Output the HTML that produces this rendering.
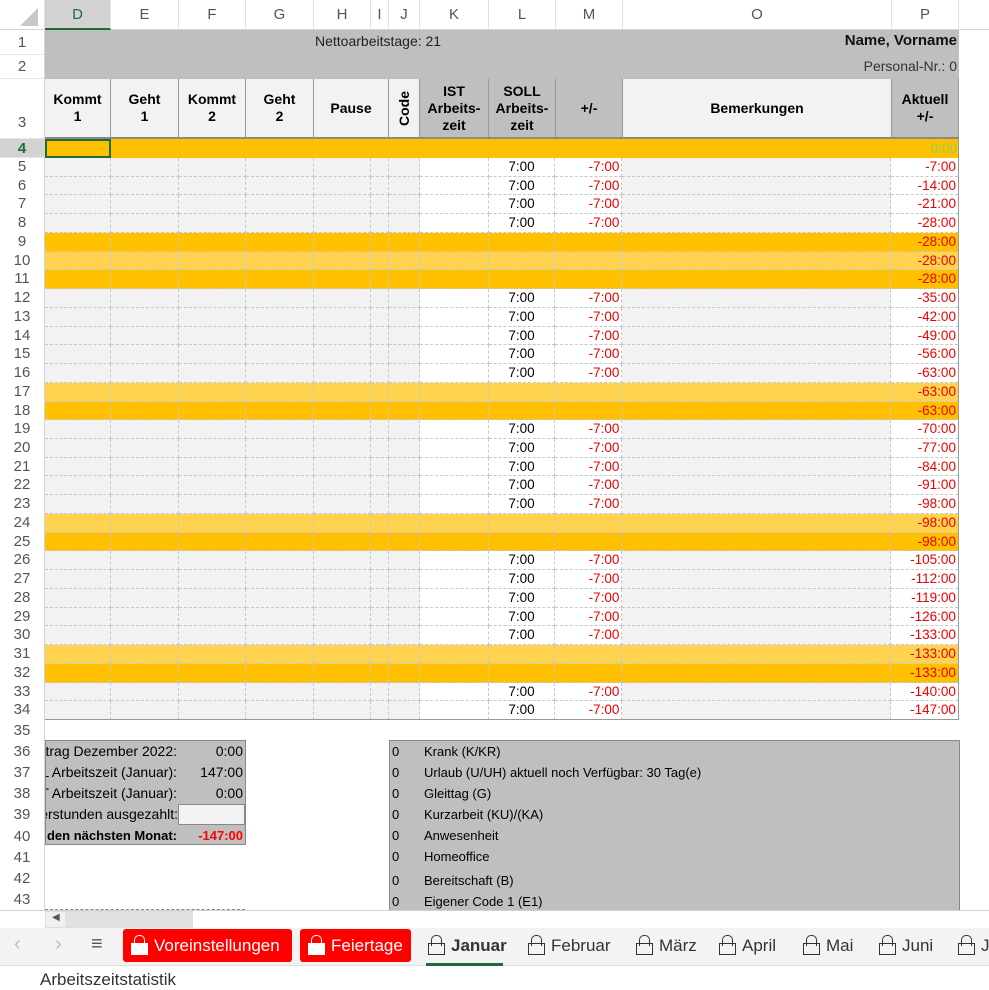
<!DOCTYPE html>
<html><head><meta charset="utf-8"><style>
*{margin:0;padding:0;box-sizing:border-box}
body{width:989px;height:979px;overflow:hidden;background:#fff;font-family:"Liberation Sans",Arial,sans-serif;position:relative}
.abs{position:absolute}
.colh{top:0;height:30px;left:0;width:989px;background:#fff;border-bottom:1px solid #d4d4d4}
.colh div{position:absolute;top:0;height:29px;line-height:30px;text-align:center;font-size:15px;color:#555;border-right:1px solid #e0e0e0}
.rowh{left:0;width:45px;border-right:1px solid #d4d4d4;background:#fff}
.rowh div{position:absolute;left:0;width:44px;text-align:center;font-size:15px;color:#555;border-bottom:1px solid #e6e6e6}
.grid{left:45px;top:158px;width:914px;height:562px;display:flex;flex-direction:column;border-right:1px solid #999;overflow:hidden}
.r{flex:1 1 0;min-height:0;display:flex;font-size:13.5px;overflow:hidden}
.r span{height:100%;border-right:1px dashed #c8c8c8;border-bottom:1px dashed #c8c8c8;background:#fff;line-height:17px;padding:0 2px;white-space:nowrap;overflow:hidden}
.r span:nth-child(1){width:66px}.r span:nth-child(2){width:68px}.r span:nth-child(3){width:67px}.r span:nth-child(4){width:68px}
.r span:nth-child(5){width:57px}.r span:nth-child(6){width:18px}.r span:nth-child(7){width:31px}.r span:nth-child(8){width:69px}
.r span:nth-child(9){width:67px;text-align:center}.r span:nth-child(10){width:67px;text-align:right;color:#e00}
.r span:nth-child(11){width:269px}.r span:nth-child(12){width:67px;text-align:right;color:#e00;border-right:none}
.r span:nth-child(-n+7),.r span:nth-child(11){background:#f2f2f2}
.r.o span{background:#ffc000!important}.r.l span{background:#ffd34f!important}
.hdr{top:79px;height:60px;left:45px;display:flex;border-bottom:2px solid #8a8a8a}
.hdr div{height:58px;border-right:1px solid #999;font-weight:bold;font-size:14px;display:flex;align-items:center;justify-content:center;text-align:center;line-height:17px;background:#f2f2f2}
.hdr .g{background:#bfbfbf}
.sum div{position:absolute;font-size:14px;height:21px;line-height:21px}
.leg div{position:absolute;left:0;font-size:13px;height:21px;line-height:21px;width:560px}
.leg div b{font-weight:normal;display:inline-block;width:34px;padding-left:2px}
.tab{position:absolute;top:929px;height:33px;line-height:33px;font-size:17px;color:#333;white-space:nowrap}
.tab.red{background:#f00;color:#fff;border-radius:3px;padding:0 8px 0 8px}
.lock{display:inline-block;position:relative;width:15px;height:18px;margin-right:8px;vertical-align:-2px}
.lock:before{content:"";position:absolute;left:3px;top:0;width:9px;height:10px;border:1.3px solid currentColor;border-bottom:none;border-radius:5px 5px 0 0}
.lock:after{content:"";position:absolute;left:0;top:8px;width:15px;height:10px;border:1.3px solid currentColor}
.red .lock:after{background:#fff}
</style></head><body>

<div class="abs colh">
<div style="left:0;width:45px;background:#fff"><svg width="45" height="30"><polygon points="38,8 38,26 20,26" fill="#c8c8c8"/></svg></div>
<div style="left:45px;width:66px;background:#d2d2d2;color:#1e6b3a;border-bottom:2px solid #1e6b3a;height:30px">D</div>
<div style="left:111px;width:68px">E</div><div style="left:179px;width:67px">F</div><div style="left:246px;width:68px">G</div>
<div style="left:314px;width:57px">H</div><div style="left:371px;width:18px">I</div><div style="left:389px;width:31px">J</div>
<div style="left:420px;width:69px">K</div><div style="left:489px;width:67px">L</div><div style="left:556px;width:67px">M</div>
<div style="left:623px;width:269px">O</div><div style="left:892px;width:67px">P</div>
</div>

<div class="abs rowh" style="top:30px;height:880px">
<div style="top:0;height:25px;line-height:25px">1</div>
<div style="top:25px;height:24px;line-height:24px">2</div>
<div style="top:49px;height:60px;line-height:88px">3</div>
<div style="top:109px;height:19px;line-height:19px;background:#d2d2d2;color:#1e6b3a;font-weight:bold">4</div>
</div>
<div class="abs" style="left:0;top:158px;width:45px;height:562px;display:flex;flex-direction:column;font-size:15px;color:#555;text-align:center;border-right:1px solid #d4d4d4">
<div style="flex:1;line-height:18px">5</div><div style="flex:1;line-height:18px">6</div><div style="flex:1;line-height:18px">7</div><div style="flex:1;line-height:18px">8</div><div style="flex:1;line-height:18px">9</div><div style="flex:1;line-height:18px">10</div><div style="flex:1;line-height:18px">11</div><div style="flex:1;line-height:18px">12</div><div style="flex:1;line-height:18px">13</div><div style="flex:1;line-height:18px">14</div><div style="flex:1;line-height:18px">15</div><div style="flex:1;line-height:18px">16</div><div style="flex:1;line-height:18px">17</div><div style="flex:1;line-height:18px">18</div><div style="flex:1;line-height:18px">19</div><div style="flex:1;line-height:18px">20</div><div style="flex:1;line-height:18px">21</div><div style="flex:1;line-height:18px">22</div><div style="flex:1;line-height:18px">23</div><div style="flex:1;line-height:18px">24</div><div style="flex:1;line-height:18px">25</div><div style="flex:1;line-height:18px">26</div><div style="flex:1;line-height:18px">27</div><div style="flex:1;line-height:18px">28</div><div style="flex:1;line-height:18px">29</div><div style="flex:1;line-height:18px">30</div><div style="flex:1;line-height:18px">31</div><div style="flex:1;line-height:18px">32</div><div style="flex:1;line-height:18px">33</div><div style="flex:1;line-height:18px">34</div>
</div>
<div class="abs" style="left:0;top:720px;width:45px;height:190px;display:flex;flex-direction:column;font-size:15px;color:#555;text-align:center;border-right:1px solid #d4d4d4">
<div style="flex:1;line-height:21px">35</div><div style="flex:1;line-height:21px">36</div><div style="flex:1;line-height:21px">37</div><div style="flex:1;line-height:21px">38</div><div style="flex:1;line-height:21px">39</div><div style="flex:1;line-height:21px">40</div><div style="flex:1;line-height:21px">41</div><div style="flex:1;line-height:21px">42</div><div style="flex:1;line-height:21px">43</div>
</div>

<div class="abs" style="left:45px;top:30px;width:914px;height:49px;background:#bfbfbf"></div>
<div class="abs" style="left:315px;top:33px;font-size:14px;color:#222">Nettoarbeitstage: 21</div>
<div class="abs" style="right:32px;top:32px;font-size:15px;font-weight:bold;color:#111">Name, Vorname</div>
<div class="abs" style="right:32px;top:58px;font-size:14px;color:#333">Personal-Nr.: 0</div>

<div class="abs hdr">
<div style="width:66px">Kommt<br>1</div><div style="width:68px">Geht<br>1</div><div style="width:67px">Kommt<br>2</div><div style="width:68px">Geht<br>2</div>
<div style="width:75px">Pause</div><div style="width:31px"><span style="transform:rotate(-90deg);display:inline-block">Code</span></div>
<div class="g" style="width:69px">IST<br>Arbeits-<br>zeit</div><div class="g" style="width:67px">SOLL<br>Arbeits-<br>zeit</div><div class="g" style="width:67px">+/-</div>
<div style="width:269px">Bemerkungen</div><div class="g" style="width:67px">Aktuell<br>+/-</div>
</div>

<div class="abs" style="left:45px;top:139px;width:914px;height:19px;background:#ffc000;border-right:1px solid #999"></div>
<div class="abs" style="left:45px;top:139px;width:66px;height:19px;border:2px solid #1e6b3a"></div>
<div class="abs" style="left:892px;top:139px;width:65px;height:19px;line-height:19px;text-align:right;font-size:13.5px;color:#92d050">0:00</div>

<div class="abs grid">
<div class="r"><span></span><span></span><span></span><span></span><span></span><span></span><span></span><span></span><span>7:00</span><span>-7:00</span><span></span><span>-7:00</span></div>
<div class="r"><span></span><span></span><span></span><span></span><span></span><span></span><span></span><span></span><span>7:00</span><span>-7:00</span><span></span><span>-14:00</span></div>
<div class="r"><span></span><span></span><span></span><span></span><span></span><span></span><span></span><span></span><span>7:00</span><span>-7:00</span><span></span><span>-21:00</span></div>
<div class="r"><span></span><span></span><span></span><span></span><span></span><span></span><span></span><span></span><span>7:00</span><span>-7:00</span><span></span><span>-28:00</span></div>
<div class="r o"><span></span><span></span><span></span><span></span><span></span><span></span><span></span><span></span><span></span><span></span><span></span><span>-28:00</span></div>
<div class="r l"><span></span><span></span><span></span><span></span><span></span><span></span><span></span><span></span><span></span><span></span><span></span><span>-28:00</span></div>
<div class="r o"><span></span><span></span><span></span><span></span><span></span><span></span><span></span><span></span><span></span><span></span><span></span><span>-28:00</span></div>
<div class="r"><span></span><span></span><span></span><span></span><span></span><span></span><span></span><span></span><span>7:00</span><span>-7:00</span><span></span><span>-35:00</span></div>
<div class="r"><span></span><span></span><span></span><span></span><span></span><span></span><span></span><span></span><span>7:00</span><span>-7:00</span><span></span><span>-42:00</span></div>
<div class="r"><span></span><span></span><span></span><span></span><span></span><span></span><span></span><span></span><span>7:00</span><span>-7:00</span><span></span><span>-49:00</span></div>
<div class="r"><span></span><span></span><span></span><span></span><span></span><span></span><span></span><span></span><span>7:00</span><span>-7:00</span><span></span><span>-56:00</span></div>
<div class="r"><span></span><span></span><span></span><span></span><span></span><span></span><span></span><span></span><span>7:00</span><span>-7:00</span><span></span><span>-63:00</span></div>
<div class="r l"><span></span><span></span><span></span><span></span><span></span><span></span><span></span><span></span><span></span><span></span><span></span><span>-63:00</span></div>
<div class="r o"><span></span><span></span><span></span><span></span><span></span><span></span><span></span><span></span><span></span><span></span><span></span><span>-63:00</span></div>
<div class="r"><span></span><span></span><span></span><span></span><span></span><span></span><span></span><span></span><span>7:00</span><span>-7:00</span><span></span><span>-70:00</span></div>
<div class="r"><span></span><span></span><span></span><span></span><span></span><span></span><span></span><span></span><span>7:00</span><span>-7:00</span><span></span><span>-77:00</span></div>
<div class="r"><span></span><span></span><span></span><span></span><span></span><span></span><span></span><span></span><span>7:00</span><span>-7:00</span><span></span><span>-84:00</span></div>
<div class="r"><span></span><span></span><span></span><span></span><span></span><span></span><span></span><span></span><span>7:00</span><span>-7:00</span><span></span><span>-91:00</span></div>
<div class="r"><span></span><span></span><span></span><span></span><span></span><span></span><span></span><span></span><span>7:00</span><span>-7:00</span><span></span><span>-98:00</span></div>
<div class="r l"><span></span><span></span><span></span><span></span><span></span><span></span><span></span><span></span><span></span><span></span><span></span><span>-98:00</span></div>
<div class="r o"><span></span><span></span><span></span><span></span><span></span><span></span><span></span><span></span><span></span><span></span><span></span><span>-98:00</span></div>
<div class="r"><span></span><span></span><span></span><span></span><span></span><span></span><span></span><span></span><span>7:00</span><span>-7:00</span><span></span><span>-105:00</span></div>
<div class="r"><span></span><span></span><span></span><span></span><span></span><span></span><span></span><span></span><span>7:00</span><span>-7:00</span><span></span><span>-112:00</span></div>
<div class="r"><span></span><span></span><span></span><span></span><span></span><span></span><span></span><span></span><span>7:00</span><span>-7:00</span><span></span><span>-119:00</span></div>
<div class="r"><span></span><span></span><span></span><span></span><span></span><span></span><span></span><span></span><span>7:00</span><span>-7:00</span><span></span><span>-126:00</span></div>
<div class="r"><span></span><span></span><span></span><span></span><span></span><span></span><span></span><span></span><span>7:00</span><span>-7:00</span><span></span><span>-133:00</span></div>
<div class="r l"><span></span><span></span><span></span><span></span><span></span><span></span><span></span><span></span><span></span><span></span><span></span><span>-133:00</span></div>
<div class="r o"><span></span><span></span><span></span><span></span><span></span><span></span><span></span><span></span><span></span><span></span><span></span><span>-133:00</span></div>
<div class="r"><span></span><span></span><span></span><span></span><span></span><span></span><span></span><span></span><span>7:00</span><span>-7:00</span><span></span><span>-140:00</span></div>
<div class="r"><span></span><span></span><span></span><span></span><span></span><span></span><span></span><span></span><span>7:00</span><span>-7:00</span><span></span><span>-147:00</span></div>
</div>
<div class="abs" style="left:45px;top:719px;width:914px;height:1px;background:#999"></div>

<div class="abs sum" style="left:45px;top:740px;width:201px;height:105px;background:#bfbfbf;border:1px solid #888;overflow:hidden">
<div style="right:68px;top:0;white-space:nowrap">ertrag Dezember 2022:</div><div style="right:2px;top:0">0:00</div>
<div style="right:68px;top:21px;white-space:nowrap">L Arbeitszeit (Januar):</div><div style="right:2px;top:21px">147:00</div>
<div style="right:68px;top:42px;white-space:nowrap">T Arbeitszeit (Januar):</div><div style="right:2px;top:42px">0:00</div>
<div style="right:67px;top:63px;white-space:nowrap">erstunden ausgezahlt:</div><div style="right:0;top:63px;width:67px;background:#f2f2f2;border:1px solid #888"></div>
<div style="right:68px;top:84px;white-space:nowrap;font-weight:bold;font-size:13px">n den nächsten Monat:</div><div style="right:2px;top:84px;color:#f00;font-weight:bold;font-size:13px">-147:00</div>
</div>

<div class="abs leg" style="left:389px;top:740px;width:571px;height:170px;background:#bfbfbf;border:1px solid #888;border-bottom:none;overflow:hidden">
<div style="top:0"><b>0</b>Krank (K/KR)</div>
<div style="top:21px"><b>0</b>Urlaub (U/UH) aktuell noch Verfügbar: 30 Tag(e)</div>
<div style="top:42px"><b>0</b>Gleittag (G)</div>
<div style="top:63px"><b>0</b>Kurzarbeit (KU)/(KA)</div>
<div style="top:84px"><b>0</b>Anwesenheit</div>
<div style="top:105px"><b>0</b>Homeoffice</div>
<div style="top:129px"><b>0</b>Bereitschaft (B)</div>
<div style="top:150px"><b>0</b>Eigener Code 1 (E1)</div>
</div>
<div class="abs" style="left:45px;top:909px;width:200px;border-top:1px dashed #888"></div>

<div class="abs" style="left:0;top:910px;width:989px;height:19px;background:#fff;border-top:1px solid #d0d0d0"></div>
<div class="abs" style="left:45px;top:911px;width:148px;height:17px;background:#f0f0f0;border:1px solid #ddd"></div>
<div class="abs" style="left:65px;top:912px;width:128px;height:15px;background:#e1e1e1"></div>
<div class="abs" style="left:52px;top:912px;font-size:10px;color:#555">&#9664;</div>

<div class="abs" style="left:0;top:928px;width:989px;height:38px;background:#f3f3f3;border-bottom:1px solid #e0e0e0"></div>
<div class="abs" style="left:14px;top:933px;font-size:20px;color:#bbb">&#8249;</div>
<div class="abs" style="left:55px;top:933px;font-size:20px;color:#bbb">&#8250;</div>
<div class="abs" style="left:91px;top:933px;font-size:20px;color:#555">&#8801;</div>
<div class="tab red" style="left:123px;width:169px"><span class="lock"></span>Voreinstellungen</div>
<div class="tab red" style="left:300px;width:111px"><span class="lock"></span>Feiertage</div>
<div class="tab" style="left:428px;font-weight:bold"><span class="lock"></span>Januar</div>
<div class="abs" style="left:426px;top:963px;width:77px;height:3px;background:#1e6b3a"></div>
<div class="tab" style="left:528px"><span class="lock"></span>Februar</div>
<div class="tab" style="left:636px"><span class="lock"></span>März</div>
<div class="tab" style="left:719px"><span class="lock"></span>April</div>
<div class="tab" style="left:803px"><span class="lock"></span>Mai</div>
<div class="tab" style="left:879px"><span class="lock"></span>Juni</div>
<div class="tab" style="left:958px"><span class="lock"></span>Juli</div>
<div class="abs" style="left:40px;top:970px;font-size:17px;color:#333">Arbeitszeitstatistik</div>
</body></html>
